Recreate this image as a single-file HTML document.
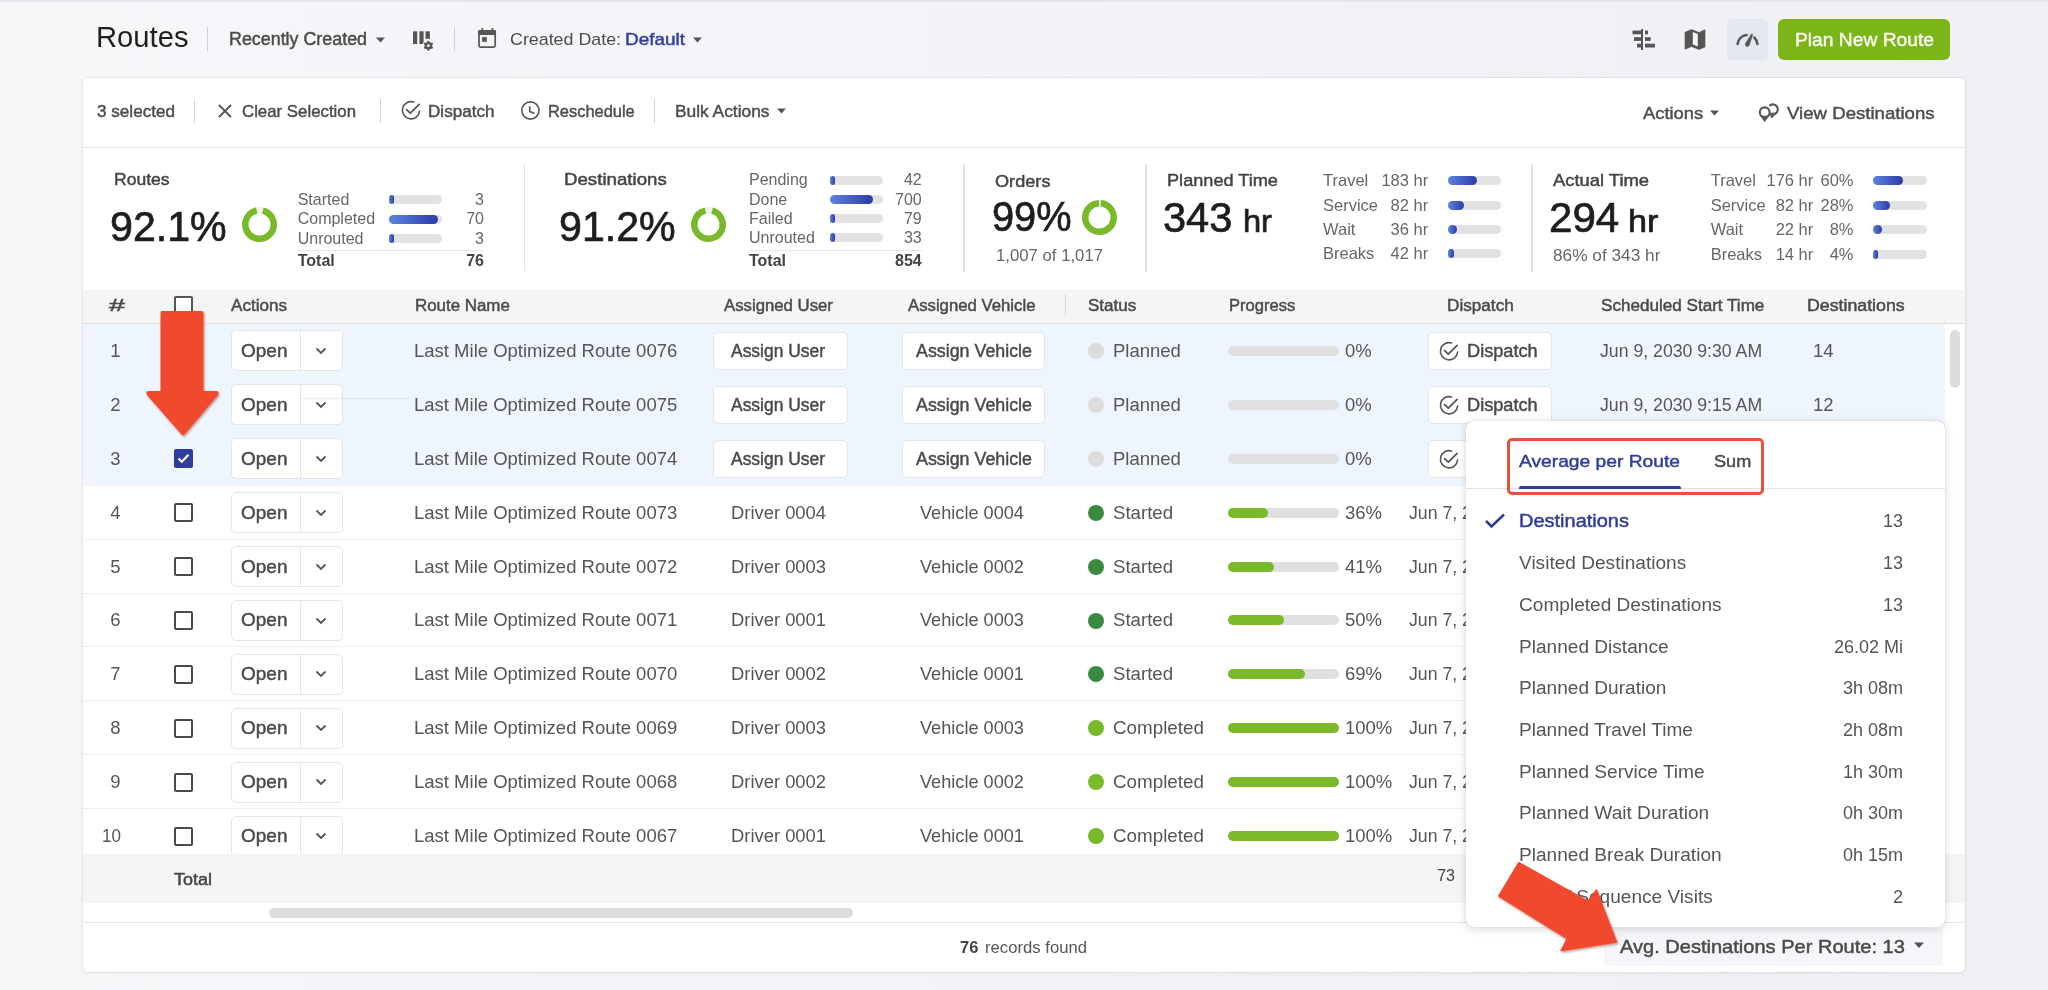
<!DOCTYPE html><html><head><meta charset="utf-8"><style>
html,body{margin:0;padding:0;}
body{width:2048px;height:990px;overflow:hidden;position:relative;background:linear-gradient(90deg,#f6f7f9 0%,#f3f4f7 40%,#eff0f5 100%);font-family:"Liberation Sans",sans-serif;}
.t{position:absolute;white-space:nowrap;}
.r{position:absolute;box-sizing:border-box;}
svg{position:absolute;overflow:visible;}
</style></head><body>
<div style="position:absolute;left:0;top:0;width:2048px;height:990px;will-change:transform;">
<div class="r" style="left:0px;top:0px;width:2048px;height:2px;background:linear-gradient(#dcdde2,#eceef2);"></div>
<div class="t" style="left:95.50px;top:22.13px;font-size:29.5px;line-height:29.5px;font-weight:400;color:#1f1f1f;transform:scaleX(0.9893);transform-origin:0.00px 0;">Routes</div>
<div class="r" style="left:207px;top:27px;width:1px;height:24px;background:#cfd0d6;"></div>
<div class="t" style="left:229.00px;top:30.99px;font-size:17.5px;line-height:17.5px;font-weight:400;color:#4a4a4a;-webkit-text-stroke:0.45px #4a4a4a;transform:scaleX(1.0207);transform-origin:0.00px 0;">Recently Created</div>
<svg style="left:375px;top:36px" width="12" height="8"><path d="M1 1.5h9l-4.5 5z" fill="#555"/></svg>
<svg style="left:412px;top:30px" width="22" height="22" viewBox="0 0 22 22"><rect x="1" y="1.3" width="4.2" height="12.7" fill="#555"/><rect x="7.4" y="1.3" width="4.2" height="12.7" fill="#555"/><rect x="13.5" y="1.3" width="4.4" height="7.5" fill="#555"/><circle cx="16.4" cy="15.7" r="6" fill="#f3f4f7"/><path d="M16.4 10.9 L18.0 13.0 L20.6 13.3 L19.5 15.7 L20.6 18.1 L18.0 18.4 L16.4 20.5 L14.8 18.4 L12.2 18.1 L13.3 15.7 L12.2 13.3 L14.8 13.0 Z" fill="#555" stroke="#555" stroke-width="1" stroke-linejoin="round"/><circle cx="16.4" cy="15.7" r="1.4" fill="#f3f4f7"/></svg>
<div class="r" style="left:454px;top:27px;width:1px;height:24px;background:#cfd0d6;"></div>
<svg style="left:477px;top:28px" width="21" height="21" viewBox="0 0 21 21"><rect x="2" y="2.8" width="16.2" height="16.4" rx="1.6" fill="none" stroke="#555" stroke-width="1.7"/><rect x="1.2" y="2" width="17.8" height="4.9" rx="1.2" fill="#555"/><rect x="4.4" y="0" width="1.7" height="3" fill="#555"/><rect x="14.6" y="0" width="1.7" height="3" fill="#555"/><rect x="5.1" y="9.1" width="4.7" height="4.7" fill="#555"/></svg>
<div class="t" style="left:510.00px;top:31.11px;font-size:17px;line-height:17px;font-weight:400;color:#4a4a4a;transform:scaleX(1.0491);transform-origin:0.00px 0;">Created Date:</div>
<div class="t" style="left:625.00px;top:31.11px;font-size:17px;line-height:17px;font-weight:400;color:#2f3e9e;-webkit-text-stroke:0.45px #2f3e9e;transform:scaleX(1.1132);transform-origin:0.00px 0;">Default</div>
<svg style="left:692px;top:36px" width="12" height="8"><path d="M1 1.5h9l-4.5 5z" fill="#555"/></svg>
<svg style="left:1632px;top:29px" width="24" height="22" viewBox="0 0 24 22" fill="#555"><rect x="9" y="0" width="2" height="21"/><rect x="0.5" y="1.6" width="8.5" height="3.7"/><rect x="13" y="1.6" width="3" height="3.7"/><rect x="2" y="8.2" width="7" height="3.7"/><rect x="13" y="8.2" width="5.7" height="3.7"/><rect x="5" y="14.7" width="4" height="3.8"/><rect x="13" y="14.7" width="10" height="3.8"/></svg>
<svg style="left:1684px;top:28px" width="22" height="22" viewBox="0 0 22 22"><path d="M1 4.3 L7.5 1.5 L15 4.5 L21 1.7 L21 19 L15 21.5 L7.5 18.6 L1 21.2 Z" fill="#555" stroke="#555" stroke-width="0.6" stroke-linejoin="round"/><path d="M8.8 4 L13.8 6 L13.8 18.5 L8.8 16.5 Z" fill="#f3f4f7"/></svg>
<div class="r" style="left:1727px;top:19px;width:41px;height:41px;background:#e5e7f0;border-radius:5px;"></div>
<svg style="left:1736px;top:33px" width="24" height="14" viewBox="0 0 24 14"><path d="M1.6 11 A10.5 10.5 0 0 1 10.6 2" fill="none" stroke="#555" stroke-width="2.5" stroke-linecap="round"/><path d="M18.25 4.5 A10.5 10.5 0 0 1 21.4 11" fill="none" stroke="#555" stroke-width="2.5" stroke-linecap="round"/><path d="M16.64 1.45 L15.56 0.95 L9.39 10.85 L13.0 12.55 Z" fill="#555" stroke="#555" stroke-width="0.8" stroke-linejoin="round"/><circle cx="11.2" cy="11.7" r="2" fill="#555"/></svg>
<div class="r" style="left:1778px;top:19px;width:172px;height:41px;background:#7cb518;border-radius:6px;"></div>
<div class="t" style="left:1795.00px;top:31.26px;font-size:18px;line-height:18px;font-weight:400;color:#f7fbee;-webkit-text-stroke:0.46px #f7fbee;transform:scaleX(1.0684);transform-origin:0.00px 0;">Plan New Route</div>
<div class="r" style="left:83px;top:78px;width:1882px;height:894px;background:#fff;border-radius:5px;box-shadow:0 0 0 1px rgba(0,0,0,0.045),0 1px 4px rgba(0,0,0,0.07);"></div>
<div class="r" style="left:83px;top:147px;width:1882px;height:1px;background:#e7e8ec;"></div>
<div class="t" style="left:97.00px;top:102.61px;font-size:17px;line-height:17px;font-weight:400;color:#4d4d4d;-webkit-text-stroke:0.45px #4d4d4d;transform:scaleX(1.0065);transform-origin:0.00px 0;">3 selected</div>
<div class="r" style="left:194px;top:99px;width:1px;height:24px;background:#d3d3d3;"></div>
<svg style="left:217px;top:103px" width="16" height="16" viewBox="0 0 16 16"><path d="M2 2L14 14M14 2L2 14" stroke="#555" stroke-width="1.8"/></svg>
<div class="t" style="left:242.00px;top:102.61px;font-size:17px;line-height:17px;font-weight:400;color:#4d4d4d;-webkit-text-stroke:0.45px #4d4d4d;transform:scaleX(0.9887);transform-origin:0.00px 0;">Clear Selection</div>
<div class="r" style="left:380px;top:99px;width:1px;height:24px;background:#d3d3d3;"></div>
<svg style="left:401px;top:100px" width="20" height="20" viewBox="0 0 20 20"><path d="M12.6 2.05 A8.6 8.6 0 1 0 18.6 11" fill="none" stroke="#555" stroke-width="1.6" stroke-linecap="round"/><path d="M5.6 9.6 L9.3 13.2 L18.1 4.4" fill="none" stroke="#555" stroke-width="1.8" stroke-linecap="round" stroke-linejoin="round"/></svg>
<div class="t" style="left:428.00px;top:102.61px;font-size:17px;line-height:17px;font-weight:400;color:#4d4d4d;-webkit-text-stroke:0.45px #4d4d4d;transform:scaleX(1.0061);transform-origin:0.00px 0;">Dispatch</div>
<svg style="left:520px;top:100px" width="21" height="21" viewBox="0 0 21 21"><circle cx="10.4" cy="10.5" r="8.6" fill="none" stroke="#555" stroke-width="1.6"/><path d="M9.7 6.3V11.4l4.8 2.2" fill="none" stroke="#555" stroke-width="1.6" stroke-linejoin="round"/></svg>
<div class="t" style="left:548.00px;top:102.61px;font-size:17px;line-height:17px;font-weight:400;color:#4d4d4d;-webkit-text-stroke:0.45px #4d4d4d;transform:scaleX(0.9655);transform-origin:0.00px 0;">Reschedule</div>
<div class="r" style="left:654px;top:99px;width:1px;height:24px;background:#d3d3d3;"></div>
<div class="t" style="left:675.00px;top:102.61px;font-size:17px;line-height:17px;font-weight:400;color:#4d4d4d;-webkit-text-stroke:0.45px #4d4d4d;transform:scaleX(1.0205);transform-origin:0.00px 0;">Bulk Actions</div>
<svg style="left:776px;top:107px" width="12" height="8"><path d="M1 1.5h9l-4.5 5z" fill="#555"/></svg>
<div class="t" style="left:1642.50px;top:104.91px;font-size:17px;line-height:17px;font-weight:400;color:#4d4d4d;-webkit-text-stroke:0.45px #4d4d4d;transform:scaleX(1.0790);transform-origin:0.00px 0;">Actions</div>
<svg style="left:1709px;top:109px" width="12" height="8"><path d="M1 1.5h9l-4.5 5z" fill="#555"/></svg>
<svg style="left:1756px;top:100px" width="24" height="24" viewBox="0 0 24 24"><circle cx="8.7" cy="12.3" r="4.9" fill="none" stroke="#555" stroke-width="2.1"/><path d="M4.9 16.3 L12.5 16.3 L8.7 21.6 Z" fill="#555" stroke="#555" stroke-width="0.8" stroke-linejoin="round"/><path d="M14.0 5.4 A4.9 4.9 0 1 1 19.5 13.5" fill="none" stroke="#555" stroke-width="2.1" stroke-linecap="round"/><path d="M14.6 13.2 L20.4 13.2 L16.0 17.6 L15.0 17.0 Z" fill="#555" stroke="#555" stroke-width="1" stroke-linejoin="round"/></svg>
<div class="t" style="left:1787.00px;top:104.91px;font-size:17px;line-height:17px;font-weight:400;color:#4d4d4d;-webkit-text-stroke:0.45px #4d4d4d;transform:scaleX(1.0950);transform-origin:0.00px 0;">View Destinations</div>
<div class="t" style="left:114.40px;top:170.61px;font-size:17px;line-height:17px;font-weight:400;color:#444;-webkit-text-stroke:0.45px #444;transform:scaleX(1.0315);transform-origin:0.00px 0;">Routes</div>
<div class="t" style="left:110.30px;top:206.42px;font-size:42.5px;line-height:42.5px;font-weight:400;color:#1e1e1e;transform:scaleX(0.9685);transform-origin:0.00px 0;-webkit-text-stroke:0.7px #1e1e1e;">92.1%</div>
<svg style="left:241.7px;top:206.8px" width="35.0" height="35.0" viewBox="0 0 35.0 35.0"><circle cx="17.5" cy="17.5" r="14.25" fill="none" stroke="#f0f0f0" stroke-width="6.5"/><circle cx="17.5" cy="17.5" r="14.25" fill="none" stroke="#7ab929" stroke-width="6.5" stroke-dasharray="82.84 6.69" transform="rotate(-76.54 17.5 17.5)"/></svg>
<div class="t" style="left:297.70px;top:191.76px;font-size:16px;line-height:16px;font-weight:400;color:#666;">Started</div>
<div class="r" style="left:389px;top:194.8px;width:53px;height:9px;background:#e2e2e2;border-radius:4.5px;"></div>
<div class="r" style="left:389px;top:194.8px;width:5px;height:9px;background:linear-gradient(90deg,#5d85e0,#2c3aa8);border-radius:4.5px;"></div>
<div class="t" style="left:475.10px;top:191.76px;font-size:16px;line-height:16px;font-weight:400;color:#666;">3</div>
<div class="t" style="left:297.70px;top:211.46px;font-size:16px;line-height:16px;font-weight:400;color:#666;">Completed</div>
<div class="r" style="left:389px;top:214.5px;width:53px;height:9px;background:#e2e2e2;border-radius:4.5px;"></div>
<div class="r" style="left:389px;top:214.5px;width:48.760000000000005px;height:9px;background:linear-gradient(90deg,#5d85e0,#2c3aa8);border-radius:4.5px;"></div>
<div class="t" style="left:466.20px;top:211.46px;font-size:16px;line-height:16px;font-weight:400;color:#666;">70</div>
<div class="t" style="left:297.70px;top:230.76px;font-size:16px;line-height:16px;font-weight:400;color:#666;">Unrouted</div>
<div class="r" style="left:389px;top:233.8px;width:53px;height:9px;background:#e2e2e2;border-radius:4.5px;"></div>
<div class="r" style="left:389px;top:233.8px;width:5px;height:9px;background:linear-gradient(90deg,#5d85e0,#2c3aa8);border-radius:4.5px;"></div>
<div class="t" style="left:475.10px;top:230.76px;font-size:16px;line-height:16px;font-weight:400;color:#666;">3</div>
<div class="r" style="left:297px;top:250px;width:187px;height:1px;background:#e4e6ef;"></div>
<div class="t" style="left:297.70px;top:253.46px;font-size:16px;line-height:16px;font-weight:700;color:#444;">Total</div>
<div class="t" style="left:466.20px;top:253.46px;font-size:16px;line-height:16px;font-weight:700;color:#444;">76</div>
<div class="r" style="left:524px;top:164px;width:1px;height:107px;background:#e3e3e3;"></div>
<div class="t" style="left:564.40px;top:170.91px;font-size:17px;line-height:17px;font-weight:400;color:#444;-webkit-text-stroke:0.45px #444;transform:scaleX(1.0983);transform-origin:0.00px 0;">Destinations</div>
<div class="t" style="left:559.30px;top:206.02px;font-size:42.5px;line-height:42.5px;font-weight:400;color:#1e1e1e;transform:scaleX(0.9685);transform-origin:0.00px 0;-webkit-text-stroke:0.7px #1e1e1e;">91.2%</div>
<svg style="left:691.0px;top:206.5px" width="35.0" height="35.0" viewBox="0 0 35.0 35.0"><circle cx="17.5" cy="17.5" r="14.25" fill="none" stroke="#f0f0f0" stroke-width="6.5"/><circle cx="17.5" cy="17.5" r="14.25" fill="none" stroke="#7ab929" stroke-width="6.5" stroke-dasharray="82.26 7.27" transform="rotate(-75.38 17.5 17.5)"/></svg>
<div class="t" style="left:749.00px;top:172.46px;font-size:16px;line-height:16px;font-weight:400;color:#666;">Pending</div>
<div class="r" style="left:830px;top:175.5px;width:53px;height:9px;background:#e2e2e2;border-radius:4.5px;"></div>
<div class="r" style="left:830px;top:175.5px;width:5px;height:9px;background:linear-gradient(90deg,#5d85e0,#2c3aa8);border-radius:4.5px;"></div>
<div class="t" style="left:903.90px;top:172.46px;font-size:16px;line-height:16px;font-weight:400;color:#666;">42</div>
<div class="t" style="left:749.00px;top:192.06px;font-size:16px;line-height:16px;font-weight:400;color:#666;">Done</div>
<div class="r" style="left:830px;top:195.1px;width:53px;height:9px;background:#e2e2e2;border-radius:4.5px;"></div>
<div class="r" style="left:830px;top:195.1px;width:43.46px;height:9px;background:linear-gradient(90deg,#5d85e0,#2c3aa8);border-radius:4.5px;"></div>
<div class="t" style="left:895.00px;top:192.06px;font-size:16px;line-height:16px;font-weight:400;color:#666;">700</div>
<div class="t" style="left:749.00px;top:211.26px;font-size:16px;line-height:16px;font-weight:400;color:#666;">Failed</div>
<div class="r" style="left:830px;top:214.3px;width:53px;height:9px;background:#e2e2e2;border-radius:4.5px;"></div>
<div class="r" style="left:830px;top:214.3px;width:5px;height:9px;background:linear-gradient(90deg,#5d85e0,#2c3aa8);border-radius:4.5px;"></div>
<div class="t" style="left:903.90px;top:211.26px;font-size:16px;line-height:16px;font-weight:400;color:#666;">79</div>
<div class="t" style="left:749.00px;top:230.16px;font-size:16px;line-height:16px;font-weight:400;color:#666;">Unrouted</div>
<div class="r" style="left:830px;top:233.2px;width:53px;height:9px;background:#e2e2e2;border-radius:4.5px;"></div>
<div class="r" style="left:830px;top:233.2px;width:5px;height:9px;background:linear-gradient(90deg,#5d85e0,#2c3aa8);border-radius:4.5px;"></div>
<div class="t" style="left:903.90px;top:230.16px;font-size:16px;line-height:16px;font-weight:400;color:#666;">33</div>
<div class="r" style="left:749px;top:250px;width:173px;height:1px;background:#e4e6ef;"></div>
<div class="t" style="left:749.00px;top:253.16px;font-size:16px;line-height:16px;font-weight:700;color:#444;">Total</div>
<div class="t" style="left:895.00px;top:253.16px;font-size:16px;line-height:16px;font-weight:700;color:#444;">854</div>
<div class="r" style="left:963px;top:164px;width:2px;height:108px;background:#e3e3e3;"></div>
<div class="t" style="left:995.00px;top:172.61px;font-size:17px;line-height:17px;font-weight:400;color:#444;-webkit-text-stroke:0.45px #444;transform:scaleX(1.0673);transform-origin:0.00px 0;">Orders</div>
<div class="t" style="left:992.40px;top:195.85px;font-size:42px;line-height:42px;font-weight:400;color:#1e1e1e;transform:scaleX(0.9465);transform-origin:0.00px 0;-webkit-text-stroke:0.7px #1e1e1e;">99%</div>
<svg style="left:1082.0px;top:199.5px" width="35.0" height="35.0" viewBox="0 0 35.0 35.0"><circle cx="17.5" cy="17.5" r="14.25" fill="none" stroke="#f0f0f0" stroke-width="6.5"/><circle cx="17.5" cy="17.5" r="14.25" fill="none" stroke="#7ab929" stroke-width="6.5" stroke-dasharray="87.29 2.24" transform="rotate(-85.49 17.5 17.5)"/></svg>
<div class="t" style="left:996.00px;top:247.33px;font-size:16.5px;line-height:16.5px;font-weight:400;color:#666;transform:scaleX(1.0142);transform-origin:0.00px 0;">1,007 of 1,017</div>
<div class="r" style="left:1145px;top:164px;width:2px;height:108px;background:#e3e3e3;"></div>
<div class="t" style="left:1167.00px;top:172.31px;font-size:17px;line-height:17px;font-weight:400;color:#444;-webkit-text-stroke:0.45px #444;transform:scaleX(1.0673);transform-origin:0.00px 0;">Planned Time</div>
<div class="t" style="left:1163.00px;top:195.50px;font-size:43px;line-height:43px;font-weight:400;color:#1e1e1e;transform:scaleX(0.9665);transform-origin:0.00px 0;-webkit-text-stroke:0.7px #1e1e1e;">343</div>
<div class="t" style="left:1243.00px;top:205.66px;font-size:31px;line-height:31px;font-weight:400;color:#1e1e1e;-webkit-text-stroke:0.71px #1e1e1e;transform:scaleX(1.0507);transform-origin:0.00px 0;">hr</div>
<div class="t" style="left:1323.00px;top:172.23px;font-size:16.5px;line-height:16.5px;font-weight:400;color:#666;">Travel</div>
<div class="t" style="left:1381.40px;top:172.23px;font-size:16.5px;line-height:16.5px;font-weight:400;color:#666;">183 hr</div>
<div class="r" style="left:1448px;top:176.2px;width:53px;height:9px;background:#e2e2e2;border-radius:4.5px;"></div>
<div class="r" style="left:1448px;top:176.2px;width:28.62px;height:9px;background:linear-gradient(90deg,#5d85e0,#2c3aa8);border-radius:4.5px;"></div>
<div class="t" style="left:1323.00px;top:197.03px;font-size:16.5px;line-height:16.5px;font-weight:400;color:#666;">Service</div>
<div class="t" style="left:1390.60px;top:197.03px;font-size:16.5px;line-height:16.5px;font-weight:400;color:#666;">82 hr</div>
<div class="r" style="left:1448px;top:201px;width:53px;height:9px;background:#e2e2e2;border-radius:4.5px;"></div>
<div class="r" style="left:1448px;top:201px;width:15.899999999999999px;height:9px;background:linear-gradient(90deg,#5d85e0,#2c3aa8);border-radius:4.5px;"></div>
<div class="t" style="left:1323.00px;top:221.03px;font-size:16.5px;line-height:16.5px;font-weight:400;color:#666;">Wait</div>
<div class="t" style="left:1390.60px;top:221.03px;font-size:16.5px;line-height:16.5px;font-weight:400;color:#666;">36 hr</div>
<div class="r" style="left:1448px;top:225px;width:53px;height:9px;background:#e2e2e2;border-radius:4.5px;"></div>
<div class="r" style="left:1448px;top:225px;width:9.01px;height:9px;background:linear-gradient(90deg,#5d85e0,#2c3aa8);border-radius:4.5px;"></div>
<div class="t" style="left:1323.00px;top:245.43px;font-size:16.5px;line-height:16.5px;font-weight:400;color:#666;">Breaks</div>
<div class="t" style="left:1390.60px;top:245.43px;font-size:16.5px;line-height:16.5px;font-weight:400;color:#666;">42 hr</div>
<div class="r" style="left:1448px;top:249.39999999999998px;width:53px;height:9px;background:#e2e2e2;border-radius:4.5px;"></div>
<div class="r" style="left:1448px;top:249.39999999999998px;width:5.83px;height:9px;background:linear-gradient(90deg,#5d85e0,#2c3aa8);border-radius:4.5px;"></div>
<div class="r" style="left:1531px;top:164px;width:2px;height:108px;background:#e3e3e3;"></div>
<div class="t" style="left:1552.50px;top:172.41px;font-size:17px;line-height:17px;font-weight:400;color:#444;-webkit-text-stroke:0.45px #444;transform:scaleX(1.0811);transform-origin:0.00px 0;">Actual Time</div>
<div class="t" style="left:1548.60px;top:195.60px;font-size:43px;line-height:43px;font-weight:400;color:#1e1e1e;transform:scaleX(0.9791);transform-origin:0.00px 0;-webkit-text-stroke:0.7px #1e1e1e;">294</div>
<div class="t" style="left:1628.00px;top:205.76px;font-size:31px;line-height:31px;font-weight:400;color:#1e1e1e;-webkit-text-stroke:0.71px #1e1e1e;transform:scaleX(1.1014);transform-origin:0.00px 0;">hr</div>
<div class="t" style="left:1552.50px;top:246.61px;font-size:17px;line-height:17px;font-weight:400;color:#666;transform:scaleX(1.0151);transform-origin:0.00px 0;">86% of 343 hr</div>
<div class="t" style="left:1710.70px;top:172.03px;font-size:16.5px;line-height:16.5px;font-weight:400;color:#666;">Travel</div>
<div class="t" style="left:1766.50px;top:172.03px;font-size:16.5px;line-height:16.5px;font-weight:400;color:#666;">176 hr</div>
<div class="t" style="left:1820.50px;top:172.03px;font-size:16.5px;line-height:16.5px;font-weight:400;color:#666;">60%</div>
<div class="r" style="left:1873px;top:176px;width:54px;height:9px;background:#e2e2e2;border-radius:4.5px;"></div>
<div class="r" style="left:1873px;top:176px;width:29.700000000000003px;height:9px;background:linear-gradient(90deg,#5d85e0,#2c3aa8);border-radius:4.5px;"></div>
<div class="t" style="left:1710.70px;top:197.03px;font-size:16.5px;line-height:16.5px;font-weight:400;color:#666;">Service</div>
<div class="t" style="left:1775.70px;top:197.03px;font-size:16.5px;line-height:16.5px;font-weight:400;color:#666;">82 hr</div>
<div class="t" style="left:1820.50px;top:197.03px;font-size:16.5px;line-height:16.5px;font-weight:400;color:#666;">28%</div>
<div class="r" style="left:1873px;top:201px;width:54px;height:9px;background:#e2e2e2;border-radius:4.5px;"></div>
<div class="r" style="left:1873px;top:201px;width:16.74px;height:9px;background:linear-gradient(90deg,#5d85e0,#2c3aa8);border-radius:4.5px;"></div>
<div class="t" style="left:1710.70px;top:220.73px;font-size:16.5px;line-height:16.5px;font-weight:400;color:#666;">Wait</div>
<div class="t" style="left:1775.70px;top:220.73px;font-size:16.5px;line-height:16.5px;font-weight:400;color:#666;">22 hr</div>
<div class="t" style="left:1829.70px;top:220.73px;font-size:16.5px;line-height:16.5px;font-weight:400;color:#666;">8%</div>
<div class="r" style="left:1873px;top:224.7px;width:54px;height:9px;background:#e2e2e2;border-radius:4.5px;"></div>
<div class="r" style="left:1873px;top:224.7px;width:8.64px;height:9px;background:linear-gradient(90deg,#5d85e0,#2c3aa8);border-radius:4.5px;"></div>
<div class="t" style="left:1710.70px;top:246.03px;font-size:16.5px;line-height:16.5px;font-weight:400;color:#666;">Breaks</div>
<div class="t" style="left:1775.70px;top:246.03px;font-size:16.5px;line-height:16.5px;font-weight:400;color:#666;">14 hr</div>
<div class="t" style="left:1829.70px;top:246.03px;font-size:16.5px;line-height:16.5px;font-weight:400;color:#666;">4%</div>
<div class="r" style="left:1873px;top:250px;width:54px;height:9px;background:#e2e2e2;border-radius:4.5px;"></div>
<div class="r" style="left:1873px;top:250px;width:5.4px;height:9px;background:linear-gradient(90deg,#5d85e0,#2c3aa8);border-radius:4.5px;"></div>
<div class="r" style="left:83px;top:290px;width:1882px;height:33px;background:#f5f5f5;"></div>
<div class="r" style="left:83px;top:323px;width:1882px;height:1px;background:#e2e2e2;"></div>
<div class="t" style="left:109.00px;top:297.11px;font-size:17px;line-height:17px;font-weight:400;color:#4a4a4a;-webkit-text-stroke:0.45px #4a4a4a;transform:scaleX(1.6842);transform-origin:0.00px 0;">#</div>
<div class="r" style="left:174px;top:296px;width:19px;height:19px;border:2px solid #555;border-radius:2px;background:#fff;"></div>
<div class="t" style="left:230.50px;top:297.96px;font-size:16px;line-height:16px;font-weight:400;color:#4a4a4a;-webkit-text-stroke:0.45px #4a4a4a;transform:scaleX(1.0686);transform-origin:0.00px 0;">Actions</div>
<div class="t" style="left:414.70px;top:297.96px;font-size:16px;line-height:16px;font-weight:400;color:#4a4a4a;-webkit-text-stroke:0.45px #4a4a4a;transform:scaleX(1.0557);transform-origin:0.00px 0;">Route Name</div>
<div class="t" style="left:723.60px;top:297.96px;font-size:16px;line-height:16px;font-weight:400;color:#4a4a4a;-webkit-text-stroke:0.45px #4a4a4a;transform:scaleX(1.0471);transform-origin:0.00px 0;">Assigned User</div>
<div class="t" style="left:907.50px;top:297.96px;font-size:16px;line-height:16px;font-weight:400;color:#4a4a4a;-webkit-text-stroke:0.45px #4a4a4a;transform:scaleX(1.0459);transform-origin:0.00px 0;">Assigned Vehicle</div>
<div class="r" style="left:1065px;top:294px;width:1px;height:21px;background:#d8d8d8;"></div>
<div class="t" style="left:1087.70px;top:297.96px;font-size:16px;line-height:16px;font-weight:400;color:#4a4a4a;-webkit-text-stroke:0.45px #4a4a4a;transform:scaleX(1.0639);transform-origin:0.00px 0;">Status</div>
<div class="t" style="left:1228.60px;top:297.96px;font-size:16px;line-height:16px;font-weight:400;color:#4a4a4a;-webkit-text-stroke:0.45px #4a4a4a;transform:scaleX(1.0344);transform-origin:0.00px 0;">Progress</div>
<div class="t" style="left:1446.80px;top:297.96px;font-size:16px;line-height:16px;font-weight:400;color:#4a4a4a;-webkit-text-stroke:0.45px #4a4a4a;transform:scaleX(1.0722);transform-origin:0.00px 0;">Dispatch</div>
<div class="t" style="left:1600.60px;top:297.96px;font-size:16px;line-height:16px;font-weight:400;color:#4a4a4a;-webkit-text-stroke:0.45px #4a4a4a;transform:scaleX(1.0680);transform-origin:0.00px 0;">Scheduled Start Time</div>
<div class="t" style="left:1807.00px;top:297.96px;font-size:16px;line-height:16px;font-weight:400;color:#4a4a4a;-webkit-text-stroke:0.45px #4a4a4a;transform:scaleX(1.1091);transform-origin:0.00px 0;">Destinations</div>
<div class="r" style="left:83px;top:324px;width:1882px;height:530px;overflow:hidden;">
<div class="r" style="left:0px;top:0.0px;width:1862px;height:54.699999999999996px;background:#eff5fd;"></div>
<div class="t" style="left:27.36px;top:17.99px;font-size:18.5px;line-height:18.5px;font-weight:400;color:#555;">1</div>
<div class="r" style="left:148px;top:6.449999999999989px;width:112px;height:41px;background:#fff;border:1px solid #e3e5ea;border-radius:5px;"></div>
<div class="r" style="left:217px;top:6.949999999999989px;width:1px;height:40px;background:#e3e5ea;"></div>
<div class="t" style="left:158.00px;top:17.99px;font-size:18.5px;line-height:18.5px;font-weight:400;color:#4a4a4a;-webkit-text-stroke:0.47px #4a4a4a;transform:scaleX(1.0265);transform-origin:0.00px 0;">Open</div>
<svg style="left:232px;top:22.9px" width="12" height="8" viewBox="0 0 12 8"><path d="M1.5 1.5l4.5 4.5 4.5-4.5" fill="none" stroke="#555" stroke-width="1.8"/></svg>
<div class="t" style="left:331.00px;top:17.99px;font-size:18.5px;line-height:18.5px;font-weight:400;color:#555;">Last Mile Optimized Route 0076</div>
<div class="r" style="left:630px;top:7.949999999999989px;width:135px;height:38px;background:#fff;border:1px solid #e3e5ea;border-radius:5px;"></div>
<div class="t" style="left:648.00px;top:18.41px;font-size:18px;line-height:18px;font-weight:400;color:#4a4a4a;-webkit-text-stroke:0.46px #4a4a4a;transform:scaleX(0.9691);transform-origin:0.00px 0;">Assign User</div>
<div class="r" style="left:819px;top:7.949999999999989px;width:143px;height:38px;background:#fff;border:1px solid #e3e5ea;border-radius:5px;"></div>
<div class="t" style="left:833.00px;top:18.41px;font-size:18px;line-height:18px;font-weight:400;color:#4a4a4a;-webkit-text-stroke:0.46px #4a4a4a;transform:scaleX(0.9906);transform-origin:0.00px 0;">Assign Vehicle</div>
<div class="r" style="left:1005px;top:18.9px;width:16px;height:16px;border-radius:50%;background:#dcdcdc;"></div>
<div class="t" style="left:1030.00px;top:17.99px;font-size:18.5px;line-height:18.5px;font-weight:400;color:#555;">Planned</div>
<div class="r" style="left:1145px;top:21.94999999999999px;width:111px;height:10px;background:#e0e0e0;border-radius:5px;"></div>
<div class="t" style="left:1262.00px;top:17.99px;font-size:18.5px;line-height:18.5px;font-weight:400;color:#555;">0%</div>
<div class="r" style="left:1345px;top:8.449999999999989px;width:124px;height:38px;background:#fff;border:1px solid #e3e5ea;border-radius:5px;"></div>
<svg style="left:1356px;top:16.94999999999999px" width="20" height="20" viewBox="0 0 20 20"><path d="M12.6 2.05 A8.6 8.6 0 1 0 18.6 11" fill="none" stroke="#555" stroke-width="1.6" stroke-linecap="round"/><path d="M5.6 9.6 L9.3 13.2 L18.1 4.4" fill="none" stroke="#555" stroke-width="1.8" stroke-linecap="round" stroke-linejoin="round"/></svg>
<div class="t" style="left:1383.60px;top:18.41px;font-size:18px;line-height:18px;font-weight:400;color:#4a4a4a;-webkit-text-stroke:0.46px #4a4a4a;transform:scaleX(1.0100);transform-origin:0.00px 0;">Dispatch</div>
<div class="t" style="left:1517.40px;top:17.99px;font-size:18.5px;line-height:18.5px;font-weight:400;color:#555;transform:scaleX(0.9552);transform-origin:0.00px 0;">Jun 9, 2030 9:30 AM</div>
<div class="t" style="left:1730.00px;top:17.99px;font-size:18.5px;line-height:18.5px;font-weight:400;color:#555;">14</div>
<div class="r" style="left:0px;top:53.89999999999998px;width:1862px;height:54.699999999999996px;background:#eff5fd;"></div>
<div class="t" style="left:27.36px;top:71.89px;font-size:18.5px;line-height:18.5px;font-weight:400;color:#555;">2</div>
<div class="r" style="left:148px;top:60.349999999999966px;width:112px;height:41px;background:#fff;border:1px solid #e3e5ea;border-radius:5px;"></div>
<div class="r" style="left:217px;top:60.849999999999966px;width:1px;height:40px;background:#e3e5ea;"></div>
<div class="t" style="left:158.00px;top:71.89px;font-size:18.5px;line-height:18.5px;font-weight:400;color:#4a4a4a;-webkit-text-stroke:0.47px #4a4a4a;transform:scaleX(1.0265);transform-origin:0.00px 0;">Open</div>
<svg style="left:232px;top:76.8px" width="12" height="8" viewBox="0 0 12 8"><path d="M1.5 1.5l4.5 4.5 4.5-4.5" fill="none" stroke="#555" stroke-width="1.8"/></svg>
<div class="t" style="left:331.00px;top:71.89px;font-size:18.5px;line-height:18.5px;font-weight:400;color:#555;">Last Mile Optimized Route 0075</div>
<div class="r" style="left:630px;top:61.849999999999966px;width:135px;height:38px;background:#fff;border:1px solid #e3e5ea;border-radius:5px;"></div>
<div class="t" style="left:648.00px;top:72.31px;font-size:18px;line-height:18px;font-weight:400;color:#4a4a4a;-webkit-text-stroke:0.46px #4a4a4a;transform:scaleX(0.9691);transform-origin:0.00px 0;">Assign User</div>
<div class="r" style="left:819px;top:61.849999999999966px;width:143px;height:38px;background:#fff;border:1px solid #e3e5ea;border-radius:5px;"></div>
<div class="t" style="left:833.00px;top:72.31px;font-size:18px;line-height:18px;font-weight:400;color:#4a4a4a;-webkit-text-stroke:0.46px #4a4a4a;transform:scaleX(0.9906);transform-origin:0.00px 0;">Assign Vehicle</div>
<div class="r" style="left:1005px;top:72.8px;width:16px;height:16px;border-radius:50%;background:#dcdcdc;"></div>
<div class="t" style="left:1030.00px;top:71.89px;font-size:18.5px;line-height:18.5px;font-weight:400;color:#555;">Planned</div>
<div class="r" style="left:1145px;top:75.84999999999997px;width:111px;height:10px;background:#e0e0e0;border-radius:5px;"></div>
<div class="t" style="left:1262.00px;top:71.89px;font-size:18.5px;line-height:18.5px;font-weight:400;color:#555;">0%</div>
<div class="r" style="left:1345px;top:62.349999999999966px;width:124px;height:38px;background:#fff;border:1px solid #e3e5ea;border-radius:5px;"></div>
<svg style="left:1356px;top:70.84999999999997px" width="20" height="20" viewBox="0 0 20 20"><path d="M12.6 2.05 A8.6 8.6 0 1 0 18.6 11" fill="none" stroke="#555" stroke-width="1.6" stroke-linecap="round"/><path d="M5.6 9.6 L9.3 13.2 L18.1 4.4" fill="none" stroke="#555" stroke-width="1.8" stroke-linecap="round" stroke-linejoin="round"/></svg>
<div class="t" style="left:1383.60px;top:72.31px;font-size:18px;line-height:18px;font-weight:400;color:#4a4a4a;-webkit-text-stroke:0.46px #4a4a4a;transform:scaleX(1.0100);transform-origin:0.00px 0;">Dispatch</div>
<div class="t" style="left:1517.40px;top:71.89px;font-size:18.5px;line-height:18.5px;font-weight:400;color:#555;transform:scaleX(0.9552);transform-origin:0.00px 0;">Jun 9, 2030 9:15 AM</div>
<div class="t" style="left:1730.00px;top:71.89px;font-size:18.5px;line-height:18.5px;font-weight:400;color:#555;">12</div>
<div class="r" style="left:0px;top:107.80000000000001px;width:1862px;height:54.699999999999996px;background:#eff5fd;"></div>
<div class="t" style="left:27.36px;top:125.79px;font-size:18.5px;line-height:18.5px;font-weight:400;color:#555;">3</div>
<div class="r" style="left:91px;top:125.2px;width:19px;height:19px;background:#2e3ea0;border-radius:2px;"></div>
<svg style="left:91px;top:125.2px" width="19" height="19" viewBox="0 0 19 19"><path d="M4.5 9.5l3.3 3.3 6.7-7" fill="none" stroke="#fff" stroke-width="2.2"/></svg>
<div class="r" style="left:148px;top:114.25px;width:112px;height:41px;background:#fff;border:1px solid #e3e5ea;border-radius:5px;"></div>
<div class="r" style="left:217px;top:114.75px;width:1px;height:40px;background:#e3e5ea;"></div>
<div class="t" style="left:158.00px;top:125.79px;font-size:18.5px;line-height:18.5px;font-weight:400;color:#4a4a4a;-webkit-text-stroke:0.47px #4a4a4a;transform:scaleX(1.0265);transform-origin:0.00px 0;">Open</div>
<svg style="left:232px;top:130.8px" width="12" height="8" viewBox="0 0 12 8"><path d="M1.5 1.5l4.5 4.5 4.5-4.5" fill="none" stroke="#555" stroke-width="1.8"/></svg>
<div class="t" style="left:331.00px;top:125.79px;font-size:18.5px;line-height:18.5px;font-weight:400;color:#555;">Last Mile Optimized Route 0074</div>
<div class="r" style="left:630px;top:115.75px;width:135px;height:38px;background:#fff;border:1px solid #e3e5ea;border-radius:5px;"></div>
<div class="t" style="left:648.00px;top:126.21px;font-size:18px;line-height:18px;font-weight:400;color:#4a4a4a;-webkit-text-stroke:0.46px #4a4a4a;transform:scaleX(0.9691);transform-origin:0.00px 0;">Assign User</div>
<div class="r" style="left:819px;top:115.75px;width:143px;height:38px;background:#fff;border:1px solid #e3e5ea;border-radius:5px;"></div>
<div class="t" style="left:833.00px;top:126.21px;font-size:18px;line-height:18px;font-weight:400;color:#4a4a4a;-webkit-text-stroke:0.46px #4a4a4a;transform:scaleX(0.9906);transform-origin:0.00px 0;">Assign Vehicle</div>
<div class="r" style="left:1005px;top:126.8px;width:16px;height:16px;border-radius:50%;background:#dcdcdc;"></div>
<div class="t" style="left:1030.00px;top:125.79px;font-size:18.5px;line-height:18.5px;font-weight:400;color:#555;">Planned</div>
<div class="r" style="left:1145px;top:129.75px;width:111px;height:10px;background:#e0e0e0;border-radius:5px;"></div>
<div class="t" style="left:1262.00px;top:125.79px;font-size:18.5px;line-height:18.5px;font-weight:400;color:#555;">0%</div>
<div class="r" style="left:1345px;top:116.25px;width:124px;height:38px;background:#fff;border:1px solid #e3e5ea;border-radius:5px;"></div>
<svg style="left:1356px;top:124.75px" width="20" height="20" viewBox="0 0 20 20"><path d="M12.6 2.05 A8.6 8.6 0 1 0 18.6 11" fill="none" stroke="#555" stroke-width="1.6" stroke-linecap="round"/><path d="M5.6 9.6 L9.3 13.2 L18.1 4.4" fill="none" stroke="#555" stroke-width="1.8" stroke-linecap="round" stroke-linejoin="round"/></svg>
<div class="t" style="left:1383.60px;top:126.21px;font-size:18px;line-height:18px;font-weight:400;color:#4a4a4a;-webkit-text-stroke:0.46px #4a4a4a;transform:scaleX(1.0100);transform-origin:0.00px 0;">Dispatch</div>
<div class="r" style="left:0px;top:214.60000000000002px;width:1862px;height:1px;background:#efefef;"></div>
<div class="t" style="left:27.36px;top:179.69px;font-size:18.5px;line-height:18.5px;font-weight:400;color:#555;">4</div>
<div class="r" style="left:91px;top:179.1px;width:19px;height:19px;border:2px solid #4a4a4a;border-radius:2px;"></div>
<div class="r" style="left:148px;top:168.14999999999998px;width:112px;height:41px;background:#fff;border:1px solid #e3e5ea;border-radius:5px;"></div>
<div class="r" style="left:217px;top:168.64999999999998px;width:1px;height:40px;background:#e3e5ea;"></div>
<div class="t" style="left:158.00px;top:179.69px;font-size:18.5px;line-height:18.5px;font-weight:400;color:#4a4a4a;-webkit-text-stroke:0.47px #4a4a4a;transform:scaleX(1.0265);transform-origin:0.00px 0;">Open</div>
<svg style="left:232px;top:184.6px" width="12" height="8" viewBox="0 0 12 8"><path d="M1.5 1.5l4.5 4.5 4.5-4.5" fill="none" stroke="#555" stroke-width="1.8"/></svg>
<div class="t" style="left:331.00px;top:179.69px;font-size:18.5px;line-height:18.5px;font-weight:400;color:#555;">Last Mile Optimized Route 0073</div>
<div class="t" style="left:648.00px;top:179.69px;font-size:18.5px;line-height:18.5px;font-weight:400;color:#555;transform:scaleX(0.9937);transform-origin:0.00px 0;">Driver 0004</div>
<div class="t" style="left:837.00px;top:179.69px;font-size:18.5px;line-height:18.5px;font-weight:400;color:#555;transform:scaleX(0.9811);transform-origin:0.00px 0;">Vehicle 0004</div>
<div class="r" style="left:1005px;top:180.6px;width:16px;height:16px;border-radius:50%;background:#3a8a40;"></div>
<div class="t" style="left:1030.00px;top:179.69px;font-size:18.5px;line-height:18.5px;font-weight:400;color:#555;transform:scaleX(1.0067);transform-origin:0.00px 0;">Started</div>
<div class="r" style="left:1145px;top:183.64999999999998px;width:111px;height:10px;background:#e0e0e0;border-radius:5px;"></div>
<div class="r" style="left:1145px;top:183.64999999999998px;width:39.96px;height:10px;background:#7ab929;border-radius:5px;"></div>
<div class="t" style="left:1262.00px;top:179.69px;font-size:18.5px;line-height:18.5px;font-weight:400;color:#555;">36%</div>
<div class="t" style="left:1325.50px;top:179.69px;font-size:18.5px;line-height:18.5px;font-weight:400;color:#555;transform:scaleX(0.9550);transform-origin:0.00px 0;">Jun 7, 2030</div>
<div class="r" style="left:0px;top:268.5px;width:1862px;height:1px;background:#efefef;"></div>
<div class="t" style="left:27.36px;top:233.59px;font-size:18.5px;line-height:18.5px;font-weight:400;color:#555;">5</div>
<div class="r" style="left:91px;top:233.1px;width:19px;height:19px;border:2px solid #4a4a4a;border-radius:2px;"></div>
<div class="r" style="left:148px;top:222.05000000000007px;width:112px;height:41px;background:#fff;border:1px solid #e3e5ea;border-radius:5px;"></div>
<div class="r" style="left:217px;top:222.55000000000007px;width:1px;height:40px;background:#e3e5ea;"></div>
<div class="t" style="left:158.00px;top:233.59px;font-size:18.5px;line-height:18.5px;font-weight:400;color:#4a4a4a;-webkit-text-stroke:0.47px #4a4a4a;transform:scaleX(1.0265);transform-origin:0.00px 0;">Open</div>
<svg style="left:232px;top:238.6px" width="12" height="8" viewBox="0 0 12 8"><path d="M1.5 1.5l4.5 4.5 4.5-4.5" fill="none" stroke="#555" stroke-width="1.8"/></svg>
<div class="t" style="left:331.00px;top:233.59px;font-size:18.5px;line-height:18.5px;font-weight:400;color:#555;">Last Mile Optimized Route 0072</div>
<div class="t" style="left:648.00px;top:233.59px;font-size:18.5px;line-height:18.5px;font-weight:400;color:#555;transform:scaleX(0.9937);transform-origin:0.00px 0;">Driver 0003</div>
<div class="t" style="left:837.00px;top:233.59px;font-size:18.5px;line-height:18.5px;font-weight:400;color:#555;transform:scaleX(0.9811);transform-origin:0.00px 0;">Vehicle 0002</div>
<div class="r" style="left:1005px;top:234.6px;width:16px;height:16px;border-radius:50%;background:#3a8a40;"></div>
<div class="t" style="left:1030.00px;top:233.59px;font-size:18.5px;line-height:18.5px;font-weight:400;color:#555;transform:scaleX(1.0067);transform-origin:0.00px 0;">Started</div>
<div class="r" style="left:1145px;top:237.55000000000007px;width:111px;height:10px;background:#e0e0e0;border-radius:5px;"></div>
<div class="r" style="left:1145px;top:237.55000000000007px;width:45.51px;height:10px;background:#7ab929;border-radius:5px;"></div>
<div class="t" style="left:1262.00px;top:233.59px;font-size:18.5px;line-height:18.5px;font-weight:400;color:#555;">41%</div>
<div class="t" style="left:1325.50px;top:233.59px;font-size:18.5px;line-height:18.5px;font-weight:400;color:#555;transform:scaleX(0.9550);transform-origin:0.00px 0;">Jun 7, 2030</div>
<div class="r" style="left:0px;top:322.4px;width:1862px;height:1px;background:#efefef;"></div>
<div class="t" style="left:27.36px;top:287.49px;font-size:18.5px;line-height:18.5px;font-weight:400;color:#555;">6</div>
<div class="r" style="left:91px;top:287.0px;width:19px;height:19px;border:2px solid #4a4a4a;border-radius:2px;"></div>
<div class="r" style="left:148px;top:275.95000000000005px;width:112px;height:41px;background:#fff;border:1px solid #e3e5ea;border-radius:5px;"></div>
<div class="r" style="left:217px;top:276.45000000000005px;width:1px;height:40px;background:#e3e5ea;"></div>
<div class="t" style="left:158.00px;top:287.49px;font-size:18.5px;line-height:18.5px;font-weight:400;color:#4a4a4a;-webkit-text-stroke:0.47px #4a4a4a;transform:scaleX(1.0265);transform-origin:0.00px 0;">Open</div>
<svg style="left:232px;top:292.5px" width="12" height="8" viewBox="0 0 12 8"><path d="M1.5 1.5l4.5 4.5 4.5-4.5" fill="none" stroke="#555" stroke-width="1.8"/></svg>
<div class="t" style="left:331.00px;top:287.49px;font-size:18.5px;line-height:18.5px;font-weight:400;color:#555;">Last Mile Optimized Route 0071</div>
<div class="t" style="left:648.00px;top:287.49px;font-size:18.5px;line-height:18.5px;font-weight:400;color:#555;transform:scaleX(0.9937);transform-origin:0.00px 0;">Driver 0001</div>
<div class="t" style="left:837.00px;top:287.49px;font-size:18.5px;line-height:18.5px;font-weight:400;color:#555;transform:scaleX(0.9811);transform-origin:0.00px 0;">Vehicle 0003</div>
<div class="r" style="left:1005px;top:288.5px;width:16px;height:16px;border-radius:50%;background:#3a8a40;"></div>
<div class="t" style="left:1030.00px;top:287.49px;font-size:18.5px;line-height:18.5px;font-weight:400;color:#555;transform:scaleX(1.0067);transform-origin:0.00px 0;">Started</div>
<div class="r" style="left:1145px;top:291.45000000000005px;width:111px;height:10px;background:#e0e0e0;border-radius:5px;"></div>
<div class="r" style="left:1145px;top:291.45000000000005px;width:55.5px;height:10px;background:#7ab929;border-radius:5px;"></div>
<div class="t" style="left:1262.00px;top:287.49px;font-size:18.5px;line-height:18.5px;font-weight:400;color:#555;">50%</div>
<div class="t" style="left:1325.50px;top:287.49px;font-size:18.5px;line-height:18.5px;font-weight:400;color:#555;transform:scaleX(0.9550);transform-origin:0.00px 0;">Jun 7, 2030</div>
<div class="r" style="left:0px;top:376.29999999999995px;width:1862px;height:1px;background:#efefef;"></div>
<div class="t" style="left:27.36px;top:341.39px;font-size:18.5px;line-height:18.5px;font-weight:400;color:#555;">7</div>
<div class="r" style="left:91px;top:340.9px;width:19px;height:19px;border:2px solid #4a4a4a;border-radius:2px;"></div>
<div class="r" style="left:148px;top:329.85px;width:112px;height:41px;background:#fff;border:1px solid #e3e5ea;border-radius:5px;"></div>
<div class="r" style="left:217px;top:330.35px;width:1px;height:40px;background:#e3e5ea;"></div>
<div class="t" style="left:158.00px;top:341.39px;font-size:18.5px;line-height:18.5px;font-weight:400;color:#4a4a4a;-webkit-text-stroke:0.47px #4a4a4a;transform:scaleX(1.0265);transform-origin:0.00px 0;">Open</div>
<svg style="left:232px;top:346.4px" width="12" height="8" viewBox="0 0 12 8"><path d="M1.5 1.5l4.5 4.5 4.5-4.5" fill="none" stroke="#555" stroke-width="1.8"/></svg>
<div class="t" style="left:331.00px;top:341.39px;font-size:18.5px;line-height:18.5px;font-weight:400;color:#555;">Last Mile Optimized Route 0070</div>
<div class="t" style="left:648.00px;top:341.39px;font-size:18.5px;line-height:18.5px;font-weight:400;color:#555;transform:scaleX(0.9937);transform-origin:0.00px 0;">Driver 0002</div>
<div class="t" style="left:837.00px;top:341.39px;font-size:18.5px;line-height:18.5px;font-weight:400;color:#555;transform:scaleX(0.9811);transform-origin:0.00px 0;">Vehicle 0001</div>
<div class="r" style="left:1005px;top:342.4px;width:16px;height:16px;border-radius:50%;background:#3a8a40;"></div>
<div class="t" style="left:1030.00px;top:341.39px;font-size:18.5px;line-height:18.5px;font-weight:400;color:#555;transform:scaleX(1.0067);transform-origin:0.00px 0;">Started</div>
<div class="r" style="left:1145px;top:345.35px;width:111px;height:10px;background:#e0e0e0;border-radius:5px;"></div>
<div class="r" style="left:1145px;top:345.35px;width:76.59px;height:10px;background:#7ab929;border-radius:5px;"></div>
<div class="t" style="left:1262.00px;top:341.39px;font-size:18.5px;line-height:18.5px;font-weight:400;color:#555;">69%</div>
<div class="t" style="left:1325.50px;top:341.39px;font-size:18.5px;line-height:18.5px;font-weight:400;color:#555;transform:scaleX(0.9550);transform-origin:0.00px 0;">Jun 7, 2030</div>
<div class="r" style="left:0px;top:430.19999999999993px;width:1862px;height:1px;background:#efefef;"></div>
<div class="t" style="left:27.36px;top:395.29px;font-size:18.5px;line-height:18.5px;font-weight:400;color:#555;">8</div>
<div class="r" style="left:91px;top:394.8px;width:19px;height:19px;border:2px solid #4a4a4a;border-radius:2px;"></div>
<div class="r" style="left:148px;top:383.75px;width:112px;height:41px;background:#fff;border:1px solid #e3e5ea;border-radius:5px;"></div>
<div class="r" style="left:217px;top:384.25px;width:1px;height:40px;background:#e3e5ea;"></div>
<div class="t" style="left:158.00px;top:395.29px;font-size:18.5px;line-height:18.5px;font-weight:400;color:#4a4a4a;-webkit-text-stroke:0.47px #4a4a4a;transform:scaleX(1.0265);transform-origin:0.00px 0;">Open</div>
<svg style="left:232px;top:400.2px" width="12" height="8" viewBox="0 0 12 8"><path d="M1.5 1.5l4.5 4.5 4.5-4.5" fill="none" stroke="#555" stroke-width="1.8"/></svg>
<div class="t" style="left:331.00px;top:395.29px;font-size:18.5px;line-height:18.5px;font-weight:400;color:#555;">Last Mile Optimized Route 0069</div>
<div class="t" style="left:648.00px;top:395.29px;font-size:18.5px;line-height:18.5px;font-weight:400;color:#555;transform:scaleX(0.9937);transform-origin:0.00px 0;">Driver 0003</div>
<div class="t" style="left:837.00px;top:395.29px;font-size:18.5px;line-height:18.5px;font-weight:400;color:#555;transform:scaleX(0.9811);transform-origin:0.00px 0;">Vehicle 0003</div>
<div class="r" style="left:1005px;top:396.2px;width:16px;height:16px;border-radius:50%;background:#7ab929;"></div>
<div class="t" style="left:1030.00px;top:395.29px;font-size:18.5px;line-height:18.5px;font-weight:400;color:#555;transform:scaleX(1.0168);transform-origin:0.00px 0;">Completed</div>
<div class="r" style="left:1145px;top:399.25px;width:111px;height:10px;background:#e0e0e0;border-radius:5px;"></div>
<div class="r" style="left:1145px;top:399.25px;width:111.0px;height:10px;background:#7ab929;border-radius:5px;"></div>
<div class="t" style="left:1262.00px;top:395.29px;font-size:18.5px;line-height:18.5px;font-weight:400;color:#555;">100%</div>
<div class="t" style="left:1325.50px;top:395.29px;font-size:18.5px;line-height:18.5px;font-weight:400;color:#555;transform:scaleX(0.9550);transform-origin:0.00px 0;">Jun 7, 2030</div>
<div class="r" style="left:0px;top:484.1px;width:1862px;height:1px;background:#efefef;"></div>
<div class="t" style="left:27.36px;top:449.19px;font-size:18.5px;line-height:18.5px;font-weight:400;color:#555;">9</div>
<div class="r" style="left:91px;top:448.7px;width:19px;height:19px;border:2px solid #4a4a4a;border-radius:2px;"></div>
<div class="r" style="left:148px;top:437.6500000000001px;width:112px;height:41px;background:#fff;border:1px solid #e3e5ea;border-radius:5px;"></div>
<div class="r" style="left:217px;top:438.1500000000001px;width:1px;height:40px;background:#e3e5ea;"></div>
<div class="t" style="left:158.00px;top:449.19px;font-size:18.5px;line-height:18.5px;font-weight:400;color:#4a4a4a;-webkit-text-stroke:0.47px #4a4a4a;transform:scaleX(1.0265);transform-origin:0.00px 0;">Open</div>
<svg style="left:232px;top:454.2px" width="12" height="8" viewBox="0 0 12 8"><path d="M1.5 1.5l4.5 4.5 4.5-4.5" fill="none" stroke="#555" stroke-width="1.8"/></svg>
<div class="t" style="left:331.00px;top:449.19px;font-size:18.5px;line-height:18.5px;font-weight:400;color:#555;">Last Mile Optimized Route 0068</div>
<div class="t" style="left:648.00px;top:449.19px;font-size:18.5px;line-height:18.5px;font-weight:400;color:#555;transform:scaleX(0.9937);transform-origin:0.00px 0;">Driver 0002</div>
<div class="t" style="left:837.00px;top:449.19px;font-size:18.5px;line-height:18.5px;font-weight:400;color:#555;transform:scaleX(0.9811);transform-origin:0.00px 0;">Vehicle 0002</div>
<div class="r" style="left:1005px;top:450.2px;width:16px;height:16px;border-radius:50%;background:#7ab929;"></div>
<div class="t" style="left:1030.00px;top:449.19px;font-size:18.5px;line-height:18.5px;font-weight:400;color:#555;transform:scaleX(1.0168);transform-origin:0.00px 0;">Completed</div>
<div class="r" style="left:1145px;top:453.1500000000001px;width:111px;height:10px;background:#e0e0e0;border-radius:5px;"></div>
<div class="r" style="left:1145px;top:453.1500000000001px;width:111.0px;height:10px;background:#7ab929;border-radius:5px;"></div>
<div class="t" style="left:1262.00px;top:449.19px;font-size:18.5px;line-height:18.5px;font-weight:400;color:#555;">100%</div>
<div class="t" style="left:1325.50px;top:449.19px;font-size:18.5px;line-height:18.5px;font-weight:400;color:#555;transform:scaleX(0.9550);transform-origin:0.00px 0;">Jun 7, 2030</div>
<div class="r" style="left:0px;top:537.9999999999999px;width:1862px;height:1px;background:#efefef;"></div>
<div class="t" style="left:19.00px;top:503.09px;font-size:18.5px;line-height:18.5px;font-weight:400;color:#555;transform:scaleX(0.9223);transform-origin:0.00px 0;">10</div>
<div class="r" style="left:91px;top:502.5px;width:19px;height:19px;border:2px solid #4a4a4a;border-radius:2px;"></div>
<div class="r" style="left:148px;top:491.54999999999995px;width:112px;height:41px;background:#fff;border:1px solid #e3e5ea;border-radius:5px;"></div>
<div class="r" style="left:217px;top:492.04999999999995px;width:1px;height:40px;background:#e3e5ea;"></div>
<div class="t" style="left:158.00px;top:503.09px;font-size:18.5px;line-height:18.5px;font-weight:400;color:#4a4a4a;-webkit-text-stroke:0.47px #4a4a4a;transform:scaleX(1.0265);transform-origin:0.00px 0;">Open</div>
<svg style="left:232px;top:508.0px" width="12" height="8" viewBox="0 0 12 8"><path d="M1.5 1.5l4.5 4.5 4.5-4.5" fill="none" stroke="#555" stroke-width="1.8"/></svg>
<div class="t" style="left:331.00px;top:503.09px;font-size:18.5px;line-height:18.5px;font-weight:400;color:#555;">Last Mile Optimized Route 0067</div>
<div class="t" style="left:648.00px;top:503.09px;font-size:18.5px;line-height:18.5px;font-weight:400;color:#555;transform:scaleX(0.9937);transform-origin:0.00px 0;">Driver 0001</div>
<div class="t" style="left:837.00px;top:503.09px;font-size:18.5px;line-height:18.5px;font-weight:400;color:#555;transform:scaleX(0.9811);transform-origin:0.00px 0;">Vehicle 0001</div>
<div class="r" style="left:1005px;top:504.0px;width:16px;height:16px;border-radius:50%;background:#7ab929;"></div>
<div class="t" style="left:1030.00px;top:503.09px;font-size:18.5px;line-height:18.5px;font-weight:400;color:#555;transform:scaleX(1.0168);transform-origin:0.00px 0;">Completed</div>
<div class="r" style="left:1145px;top:507.04999999999995px;width:111px;height:10px;background:#e0e0e0;border-radius:5px;"></div>
<div class="r" style="left:1145px;top:507.04999999999995px;width:111.0px;height:10px;background:#7ab929;border-radius:5px;"></div>
<div class="t" style="left:1262.00px;top:503.09px;font-size:18.5px;line-height:18.5px;font-weight:400;color:#555;">100%</div>
<div class="t" style="left:1325.50px;top:503.09px;font-size:18.5px;line-height:18.5px;font-weight:400;color:#555;transform:scaleX(0.9550);transform-origin:0.00px 0;">Jun 7, 2030</div>
</div>
<div class="r" style="left:300px;top:398px;width:110px;height:1px;background:rgba(0,0,0,0.08);"></div>
<div class="r" style="left:83px;top:854px;width:1882px;height:49px;background:#f5f5f5;"></div>
<div class="t" style="left:174.00px;top:871.96px;font-size:16px;line-height:16px;font-weight:400;color:#444;-webkit-text-stroke:0.45px #444;transform:scaleX(1.1243);transform-origin:0.00px 0;">Total</div>
<div class="t" style="left:1437.20px;top:868.46px;font-size:16px;line-height:16px;font-weight:400;color:#444;">73</div>
<div class="r" style="left:1950px;top:330px;width:10px;height:58px;background:#dddddd;border-radius:5px;"></div>
<div class="r" style="left:269px;top:908px;width:584px;height:10px;background:#dddddd;border-radius:5px;"></div>
<div class="r" style="left:83px;top:922px;width:1882px;height:1px;background:#e8e8e8;"></div>
<div class="t" style="left:960.00px;top:939.03px;font-size:16.5px;line-height:16.5px;font-weight:700;color:#444;">76</div>
<div class="t" style="left:985.00px;top:939.03px;font-size:16.5px;line-height:16.5px;font-weight:400;color:#555;transform:scaleX(1.0109);transform-origin:0.00px 0;">records found</div>
<div class="r" style="left:1604px;top:928px;width:339px;height:38px;background:#f5f6f9;border-radius:4px;"></div>
<div class="t" style="left:1620.00px;top:936.92px;font-size:19px;line-height:19px;font-weight:400;color:#4a4a4a;-webkit-text-stroke:0.48px #4a4a4a;transform:scaleX(1.0548);transform-origin:0.00px 0;">Avg. Destinations Per Route: 13</div>
<svg style="left:1913px;top:941px" width="13" height="8"><path d="M1 1.5h10l-5 5.5z" fill="#555"/></svg>
<div class="r" style="left:1466px;top:421px;width:479px;height:506px;background:#fff;border-radius:8px;box-shadow:0 2px 10px rgba(0,0,0,0.16),0 0 1px rgba(0,0,0,0.2);"></div>
<div class="r" style="left:1466px;top:488px;width:479px;height:1px;background:#e2e2e2;"></div>
<div class="t" style="left:1519.00px;top:453.41px;font-size:17px;line-height:17px;font-weight:400;color:#2f3d98;-webkit-text-stroke:0.45px #2f3d98;transform:scaleX(1.1306);transform-origin:0.00px 0;">Average per Route</div>
<div class="t" style="left:1713.70px;top:453.41px;font-size:17px;line-height:17px;font-weight:400;color:#4a4a4a;-webkit-text-stroke:0.45px #4a4a4a;transform:scaleX(1.0657);transform-origin:0.00px 0;">Sum</div>
<div class="r" style="left:1519px;top:486px;width:162px;height:3px;background:#2e3d99;border-radius:2px 2px 0 0;"></div>
<div class="r" style="left:1507px;top:438px;width:257px;height:57px;background:transparent;border:3px solid #e8513b;border-radius:5px;"></div>
<svg style="left:1484px;top:513px" width="22" height="16" viewBox="0 0 22 16"><path d="M2 8l5.5 5.5L20 1.5" fill="none" stroke="#2f3d98" stroke-width="2.6"/></svg>
<div class="t" style="left:1519.00px;top:512.06px;font-size:18px;line-height:18px;font-weight:400;color:#2f3d98;-webkit-text-stroke:0.46px #2f3d98;transform:scaleX(1.1100);transform-origin:0.00px 0;">Destinations</div>
<div class="t" style="left:1883.00px;top:512.06px;font-size:18px;line-height:18px;font-weight:400;color:#555;">13</div>
<div class="t" style="left:1519.00px;top:553.96px;font-size:18px;line-height:18px;font-weight:400;color:#555;transform:scaleX(1.0597);transform-origin:0.00px 0;">Visited Destinations</div>
<div class="t" style="left:1883.00px;top:553.96px;font-size:18px;line-height:18px;font-weight:400;color:#555;">13</div>
<div class="t" style="left:1519.00px;top:595.96px;font-size:18px;line-height:18px;font-weight:400;color:#555;transform:scaleX(1.0600);transform-origin:0.00px 0;">Completed Destinations</div>
<div class="t" style="left:1883.00px;top:595.96px;font-size:18px;line-height:18px;font-weight:400;color:#555;">13</div>
<div class="t" style="left:1519.00px;top:637.56px;font-size:18px;line-height:18px;font-weight:400;color:#555;transform:scaleX(1.0599);transform-origin:0.00px 0;">Planned Distance</div>
<div class="t" style="left:1834.00px;top:637.56px;font-size:18px;line-height:18px;font-weight:400;color:#555;">26.02 Mi</div>
<div class="t" style="left:1519.00px;top:679.26px;font-size:18px;line-height:18px;font-weight:400;color:#555;transform:scaleX(1.0600);transform-origin:0.00px 0;">Planned Duration</div>
<div class="t" style="left:1843.00px;top:679.26px;font-size:18px;line-height:18px;font-weight:400;color:#555;">3h 08m</div>
<div class="t" style="left:1519.00px;top:720.76px;font-size:18px;line-height:18px;font-weight:400;color:#555;transform:scaleX(1.0599);transform-origin:0.00px 0;">Planned Travel Time</div>
<div class="t" style="left:1843.00px;top:720.76px;font-size:18px;line-height:18px;font-weight:400;color:#555;">2h 08m</div>
<div class="t" style="left:1519.00px;top:762.66px;font-size:18px;line-height:18px;font-weight:400;color:#555;transform:scaleX(1.0599);transform-origin:0.00px 0;">Planned Service Time</div>
<div class="t" style="left:1843.00px;top:762.66px;font-size:18px;line-height:18px;font-weight:400;color:#555;">1h 30m</div>
<div class="t" style="left:1519.00px;top:804.46px;font-size:18px;line-height:18px;font-weight:400;color:#555;transform:scaleX(1.0602);transform-origin:0.00px 0;">Planned Wait Duration</div>
<div class="t" style="left:1843.00px;top:804.46px;font-size:18px;line-height:18px;font-weight:400;color:#555;">0h 30m</div>
<div class="t" style="left:1519.00px;top:845.96px;font-size:18px;line-height:18px;font-weight:400;color:#555;transform:scaleX(1.0601);transform-origin:0.00px 0;">Planned Break Duration</div>
<div class="t" style="left:1843.00px;top:845.96px;font-size:18px;line-height:18px;font-weight:400;color:#555;">0h 15m</div>
<div class="t" style="left:1519.00px;top:887.76px;font-size:18px;line-height:18px;font-weight:400;color:#555;transform:scaleX(1.0599);transform-origin:0.00px 0;">Out of Sequence Visits</div>
<div class="t" style="left:1893.00px;top:887.76px;font-size:18px;line-height:18px;font-weight:400;color:#555;">2</div>
<svg style="left:0;top:0" width="2048" height="990" viewBox="0 0 2048 990"><defs><filter id="sh" x="-20%" y="-20%" width="140%" height="140%"><feDropShadow dx="1" dy="1.5" stdDeviation="1" flood-color="#7a1a0a" flood-opacity="0.45"/></filter></defs><path d="M160.5 313 Q160.5 311 162.5 311 L201.5 311 Q203.5 311 203.5 313 L203.5 391 L216 391 Q220 391 218 395 L184.5 434.5 Q183 436 181.5 434.5 L147 395 Q145 391 149 391 L160.5 391 Z" fill="#f04a2e" filter="url(#sh)"/><path d="M1518.8 862.7 L1587.9 901.5 L1596.4 890 L1616.4 942 L1561.2 950.6 L1567.3 938.5 L1498.8 896 Z" fill="#f04a2e" stroke="#f04a2e" stroke-width="1.5" stroke-linejoin="round" filter="url(#sh)"/></svg>
</div></body></html>
